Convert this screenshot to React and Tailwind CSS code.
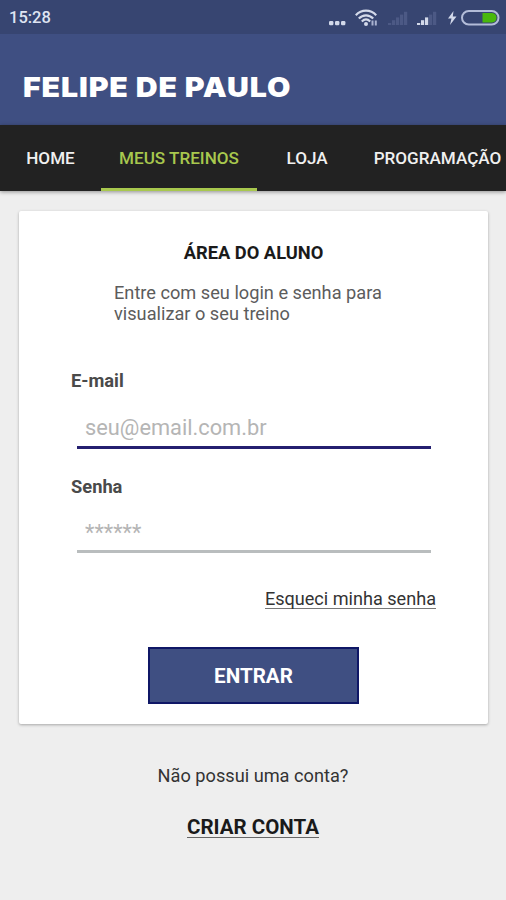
import React, { useState } from "react";

const tabs = [
  { id: "home", label: "HOME", width: "w-[101px]" },
  { id: "treinos", label: "MEUS TREINOS", width: "w-[156px]" },
  { id: "loja", label: "LOJA", width: "w-[100px]" },
  { id: "programacao", label: "PROGRAMAÇÃO", width: "w-[161px]" },
];

const WifiIcon = () => (
  <svg width="24" height="18" viewBox="0 0 24 18" fill="none" stroke="#d3d9ea" strokeWidth="2.2">
    <path d="M.8 6.2C6.500 .2 15.500 .2 21.200 6.200" />
    <path d="M3.800 9.500C8 5.200 14 5.200 18.200 9.500" />
    <path d="M6.800 12.500C9.500 9.800 12.500 9.800 15.200 12.500" />
    <circle cx="11" cy="15" r="2" fill="#d3d9ea" stroke="none" />
    <path d="M17.500 11.500V16.500M20.800 11.500V16.500" strokeWidth="2" stroke="#a9b2d0" />
  </svg>
);

const SignalIcon = ({ level }) => (
  <svg width="21" height="16" viewBox="0 0 21 16">
    {[0, 1, 2, 3, 4].map((i) => (
      <rect
        key={i}
        x={1 + i * 4}
        y={13 - i * 2.8}
        width="3.2"
        height={2 + i * 2.8}
        fill={i < level ? "#d3d9ea" : "#4c5985"}
      />
    ))}
  </svg>
);

const StatusBar = () => (
  <div className="flex h-[34px] items-center justify-between bg-[#374571] pl-[9px] pr-1.5 pt-px">
    <span className="text-[16.5px] font-medium leading-5 text-[#dfe4f2]">15:28</span>
    <div className="flex items-center">
      <svg width="18" height="18" viewBox="0 0 18 18" fill="#d3d9ea">
        <rect x="0" y="12" width="4.400" height="4.200" rx="1.200" />
        <rect x="6" y="12" width="4.400" height="4.200" rx="1.200" />
        <rect x="12" y="12" width="4.400" height="4.200" rx="1.200" />
      </svg>
      <div className="ml-2">
        <WifiIcon />
      </div>
      <div className="ml-2">
        <SignalIcon level={0} />
      </div>
      <div className="ml-2">
        <SignalIcon level={3} />
      </div>
      <svg className="ml-[11px]" width="9" height="14" viewBox="0 0 9 14" fill="#d3d9ea">
        <path d="M5.500 0L0 7.500H3.500L2 14L8.500 5.500H4.800Z" />
      </svg>
      <svg className="ml-1" width="39" height="16" viewBox="0 0 39 16">
        <rect x="1" y="1" width="36.500" height="13.500" rx="6.750" fill="none" stroke="#b3bcd8" strokeWidth="2" />
        <path d="M21.500 3H31C37 3 37 12.500 31 12.500H21.500Z" fill="#49b80c" />
      </svg>
    </div>
  </div>
);

const Field = ({ label, type, placeholder, line }) => (
  <label className="block">
    <span className="block text-[18.3px] font-bold leading-6 text-[#4a4a4a]">{label}</span>
    <input
      type={type}
      placeholder={placeholder}
      className={`ml-1.5 block w-[354px] border-b-[3px] bg-transparent px-2 text-[21.8px] text-gray-700 outline-none placeholder:text-[#b5b5b5] ${line}`}
    />
  </label>
);

const App = () => {
  const [active, setActive] = useState("treinos");

  return (
    <div className="flex h-[900px] w-[506px] flex-col overflow-hidden bg-[#eeeeee] font-[Roboto,sans-serif]">
      <StatusBar />

      <header className="flex h-[91px] items-center bg-[#3f4f82] pl-[23px] pt-3.5">
        <h1 className="origin-left scale-x-[1.1] whitespace-nowrap font-[Inter,sans-serif] text-[27.5px] font-black leading-9 tracking-[0.8px] text-white">
          FELIPE DE PAULO
        </h1>
      </header>

      <nav className="flex h-[66px] shrink-0 bg-[#222222] shadow-[0_1px_4px_rgba(0,0,0,0.4)]">
        {tabs.map((tab) => (
          <button
            key={tab.id}
            onClick={() => setActive(tab.id)}
            className={`flex shrink-0 items-center justify-center whitespace-nowrap border-b-[3px] pt-1 text-[17.1px] font-medium ${tab.width} ${
              active === tab.id
                ? "border-[#a8c84e] text-[#a8c84e]"
                : "border-transparent text-[#f0f0f0]"
            }`}
          >
            {tab.label}
          </button>
        ))}
      </nav>

      <main className="px-[19px] pt-5">
        <section className="flex h-[513px] w-[469px] flex-col rounded-[2px] bg-white shadow-[0_1px_3px_rgba(0,0,0,0.3)]">
          <h2 className="pt-[30px] text-center text-[18.3px] font-bold leading-6 text-[#1a1a1a]">
            ÁREA DO ALUNO
          </h2>
          <p className="ml-[95px] mt-[17px] w-[290px] text-[18.2px] leading-[21px] text-[#5c5c5c]">
            Entre com seu login e senha para visualizar o seu treino
          </p>

          <form className="mt-[45px] flex flex-col pl-[52px]" onSubmit={(e) => e.preventDefault()}>
            <Field label="E-mail" type="text" placeholder="seu@email.com.br" line="h-[56px] border-[#241f70] pt-4" />
            <div className="mt-[26px]">
              <Field label="Senha" type="text" placeholder="******" line="h-[54px] border-[#b9bdbe] pt-[15px]" />
            </div>
            <a
              href="#"
              className="mr-[52px] mt-[35px] h-[21px] self-end border-b border-[#777777] text-[18.1px] leading-[22px] text-[#333333]"
            >
              Esqueci minha senha
            </a>
            <button
              type="submit"
              className="ml-[77px] mt-[38px] h-[57px] w-[211px] border-2 border-[#0f1766] bg-[#3f4f82] pt-0.5 text-[20.6px] font-bold text-white"
            >
              ENTRAR
            </button>
          </form>
        </section>

        <div className="flex flex-col items-center pt-10">
          <p className="text-[18.2px] leading-6 text-[#333333]">Não possui uma conta?</p>
          <a href="#" className="mt-[29px] h-[21px] border-b border-[#666666] text-[20.5px] font-bold leading-[21px] text-[#1a1a1a]">
            CRIAR CONTA
          </a>
        </div>
      </main>
    </div>
  );
};

export default App;
